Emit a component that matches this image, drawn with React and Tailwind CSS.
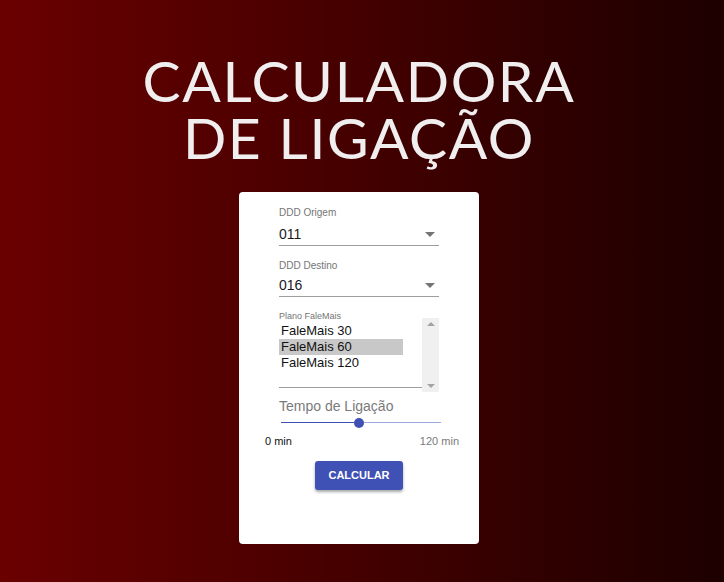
import React from "react";

function Caret() {
  return (
    <svg width="10" height="5" viewBox="0 0 10 5" className="shrink-0">
      <path d="M0 0 L10 0 L5 5 Z" fill="#757575" />
    </svg>
  );
}

function SelectField({ label, value, gap }) {
  return (
    <div className="flex flex-col">
      <span className="text-[10px] leading-[12px] text-[#757575]">{label}</span>
      <div className={`${gap} flex items-center justify-between border-b border-[#9e9e9e] pb-[3px] pr-[4px]`}>
        <span className="text-[14px] leading-[16px] text-[#1a1a1a]">{value}</span>
        <Caret />
      </div>
    </div>
  );
}

export default function App() {
  return (
    <div
      className="flex min-h-[582px] w-full flex-col items-center bg-[linear-gradient(to_right,#6a0000,#1d0000)] pr-[6px]"
      style={{ fontFamily: '"Liberation Sans", Arial, sans-serif' }}
    >
      <h1
        className="mt-[52px] text-center text-[57px] leading-[57px] tracking-[1.6px] text-[#f0eeee]"
        style={{ fontFamily: 'Lato, "Open Sans", sans-serif' }}
      >
        CALCULADORA
        <br />
        DE LIGAÇÃO
      </h1>
      <div className="mt-[26px] flex h-[352px] w-[240px] flex-col rounded-[4px] bg-white pt-[15px]">
        <div className="flex w-full flex-col px-[40px]">
          <SelectField label="DDD Origem" value="011" gap="mt-[7px]" />
          <div className="h-[14px]" />
          <SelectField label="DDD Destino" value="016" gap="mt-[5px]" />
          <div className="relative mt-[21px] flex h-[70px] w-[160px] border-b border-[#9e9e9e]">
            <span className="absolute left-0 top-[-7px] text-[9px] leading-[10px] text-[#757575]">Plano FaleMais</span>
            <div className="flex flex-1 flex-col pt-[5px]">
              <span className="h-[16px] pl-[2px] text-[13px] leading-[16px] text-[#111]">FaleMais 30</span>
              <span className="h-[16px] w-[124px] bg-[#c8c8c8] pl-[2px] text-[13px] leading-[16px] text-[#111]">FaleMais 60</span>
              <span className="h-[16px] pl-[2px] text-[13px] leading-[16px] text-[#111]">FaleMais 120</span>
            </div>
            <div className="mb-[-5px] flex w-[17px] flex-col items-center justify-between bg-[#f0f0f0] py-[4px]">
              <svg width="8" height="4" viewBox="0 0 8 4"><path d="M0 4 L8 4 L4 0 Z" fill="#a3a3a3" /></svg>
              <svg width="8" height="4" viewBox="0 0 8 4"><path d="M0 0 L8 0 L4 4 Z" fill="#a3a3a3" /></svg>
            </div>
          </div>
          <span className="mt-[10px] text-[14px] leading-[16px] text-[#7a7a7a]">Tempo de Ligação</span>
          <div className="relative mt-[4px] ml-[2px] h-[10px] w-[160px]">
            <div className="absolute left-0 top-[4px] h-px w-[78px] bg-[#3f51b5]" />
            <div className="absolute left-[78px] top-[4px] h-px w-[82px] bg-[#9fa8da]" />
            <div className="absolute left-[73px] top-0 h-[10px] w-[10px] rounded-full bg-[#3f51b5]" />
          </div>
        </div>
        <div className="mt-[6px] flex justify-between px-[20px] text-[11px] leading-[14px]">
          <span className="pl-[6px] text-[#111]">0 min</span>
          <span className="text-[#7a7a7a]">120 min</span>
        </div>
        <div className="mt-[13px] flex justify-center">
          <button className="h-[29px] w-[88px] rounded-[3px] bg-[#3f51b5] text-[11px] font-bold text-white shadow-[0_2px_3px_rgba(0,0,0,0.35)]">
            CALCULAR
          </button>
        </div>
      </div>
    </div>
  );
}
